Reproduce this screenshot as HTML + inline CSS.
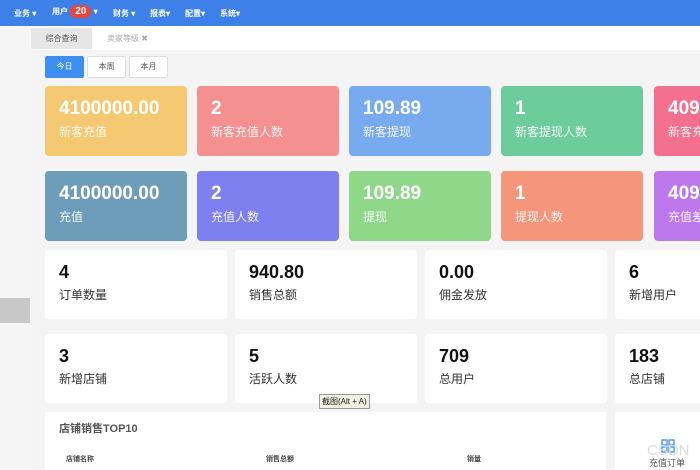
<!DOCTYPE html>
<html style="overflow:hidden"><head><meta charset="utf-8"><style>
*{margin:0;padding:0;box-sizing:border-box}
html,body{width:700px;height:470px;overflow:hidden}
body{background:#f4f4f5;font-family:"Liberation Sans","Noto Sans CJK SC",sans-serif}
#wrap{position:relative;width:700px;height:470px;overflow:hidden}
.top{position:absolute;left:0;top:0;width:700px;height:26px;background:#3d80e8;color:#fff;font-size:8px;font-weight:bold}
.top span{position:absolute;top:8px}
.badge{background:#e8453c;border-radius:7px;padding:1px 5px;font-size:10px}
.left{position:absolute;left:0;top:26px;width:31px;height:444px;background:#f5f5f5}
.tabs{position:absolute;left:31px;top:26px;width:669px;height:24px;background:#fff}
.tab1{position:absolute;left:0;top:2px;width:61px;height:21px;background:#e6e6e6;color:#555;font-size:8px;text-align:center;line-height:21px}
.tab2{position:absolute;left:76px;top:2px;color:#aaa;font-size:8px;line-height:21px}
.btn{position:absolute;top:56px;height:22px;width:39px;border:1px solid #ddd;background:#fff;border-radius:2px;font-size:8px;color:#555;text-align:center;line-height:20px}
.c{position:absolute;width:142px;height:70px;border-radius:4px;color:#fff;overflow:hidden;white-space:nowrap}
.c b{position:absolute;left:14px;top:12px;font-size:19px}
.c i{position:absolute;left:14px;top:37px;font-size:12px;font-style:normal;opacity:.9}
.w{position:absolute;width:182px;height:69px;background:#fff;border-radius:3px;color:#111}
.w b{position:absolute;left:14px;top:12px;font-size:18px}
.w i{position:absolute;left:14px;top:36px;font-size:12px;font-style:normal;color:#333}
</style></head><body><div id="wrap">
<div class="top">
<span style="left:14px">业务 ▾</span>
<span style="left:52px;top:6px">用户 <span class="badge" style="position:static">20</span> ▾</span>
<span style="left:113px">财务 ▾</span>
<span style="left:150px">报表▾</span>
<span style="left:185px">配置▾</span>
<span style="left:220px">系统▾</span>
</div>
<div class="left"><div style="position:absolute;top:272px;left:0;width:30px;height:25px;background:#c8c8c8"></div></div>
<div class="tabs"><div class="tab1">综合查询</div><div class="tab2">卖家等级 ✖</div></div>
<div class="btn" style="left:45px;background:#3d8ef0;border-color:#3d8ef0;color:#fff">今日</div>
<div class="btn" style="left:87px">本周</div>
<div class="btn" style="left:129px">本月</div>

<div class="c" style="left:45px;top:86px;background:#f4c972"><b>4100000.00</b><i>新客充值</i></div>
<div class="c" style="left:197px;top:86px;background:#f59090"><b>2</b><i>新客充值人数</i></div>
<div class="c" style="left:349px;top:86px;background:#78aaf0"><b>109.89</b><i>新客提现</i></div>
<div class="c" style="left:501px;top:86px;background:#6ccc9c"><b>1</b><i>新客提现人数</i></div>
<div class="c" style="left:654px;top:86px;width:46px;border-radius:4px 0 0 4px;background:#f3708e"><b>4090000.00</b><i>新客充值差额</i></div>

<div class="c" style="left:45px;top:171px;background:#6d9db8"><b>4100000.00</b><i>充值</i></div>
<div class="c" style="left:197px;top:171px;background:#7d80ee"><b>2</b><i>充值人数</i></div>
<div class="c" style="left:349px;top:171px;background:#8fd88a"><b>109.89</b><i>提现</i></div>
<div class="c" style="left:501px;top:171px;background:#f5957a"><b>1</b><i>提现人数</i></div>
<div class="c" style="left:654px;top:171px;width:46px;border-radius:4px 0 0 4px;background:#bd78ee"><b>4090000.00</b><i>充值差额</i></div>

<div class="w" style="left:45px;top:250px"><b>4</b><i>订单数量</i></div>
<div class="w" style="left:235px;top:250px"><b>940.80</b><i>销售总额</i></div>
<div class="w" style="left:425px;top:250px"><b>0.00</b><i>佣金发放</i></div>
<div class="w" style="left:615px;top:250px;width:85px;border-radius:3px 0 0 3px"><b>6</b><i>新增用户</i></div>

<div class="w" style="left:45px;top:334px"><b>3</b><i>新增店铺</i></div>
<div class="w" style="left:235px;top:334px"><b>5</b><i>活跃人数</i></div>
<div class="w" style="left:425px;top:334px"><b>709</b><i>总用户</i></div>
<div class="w" style="left:615px;top:334px;width:85px;border-radius:3px 0 0 3px"><b>183</b><i>总店铺</i></div>

<div style="position:absolute;left:319px;top:394px;background:#f0f0e0;border:1px solid #999;font-size:8px;padding:1px 2px;color:#222">截图(Alt + A)</div>

<div style="position:absolute;left:45px;top:412px;width:561px;height:58px;background:#fff">
<div style="position:absolute;left:14px;top:8px;font-size:11px;font-weight:bold;color:#555">店铺销售TOP10</div>
<div style="position:absolute;left:21px;top:42px;font-size:7px;font-weight:bold;color:#444">店铺名称</div>
<div style="position:absolute;left:221px;top:42px;font-size:7px;font-weight:bold;color:#444">销售总额</div>
<div style="position:absolute;left:422px;top:42px;font-size:7px;font-weight:bold;color:#444">销量</div>
</div>
<div style="position:absolute;left:615px;top:412px;width:85px;height:58px;background:#fff;overflow:hidden">
<svg style="position:absolute;left:46px;top:27px" width="14" height="14" viewBox="0 0 14 14" fill="none" stroke="#3d8ef0" stroke-width="1.3"><rect x="1" y="1" width="5" height="5"/><rect x="8" y="1" width="5" height="5"/><rect x="1" y="8" width="5" height="5"/><rect x="8" y="8" width="5" height="5"/></svg>
<div style="position:absolute;left:32px;top:30px;font-size:15px;color:#ddd">CSDN</div>
<div style="position:absolute;left:34px;top:44px;font-size:9px;color:#555">充值订单</div>
</div>
</div></body></html>
